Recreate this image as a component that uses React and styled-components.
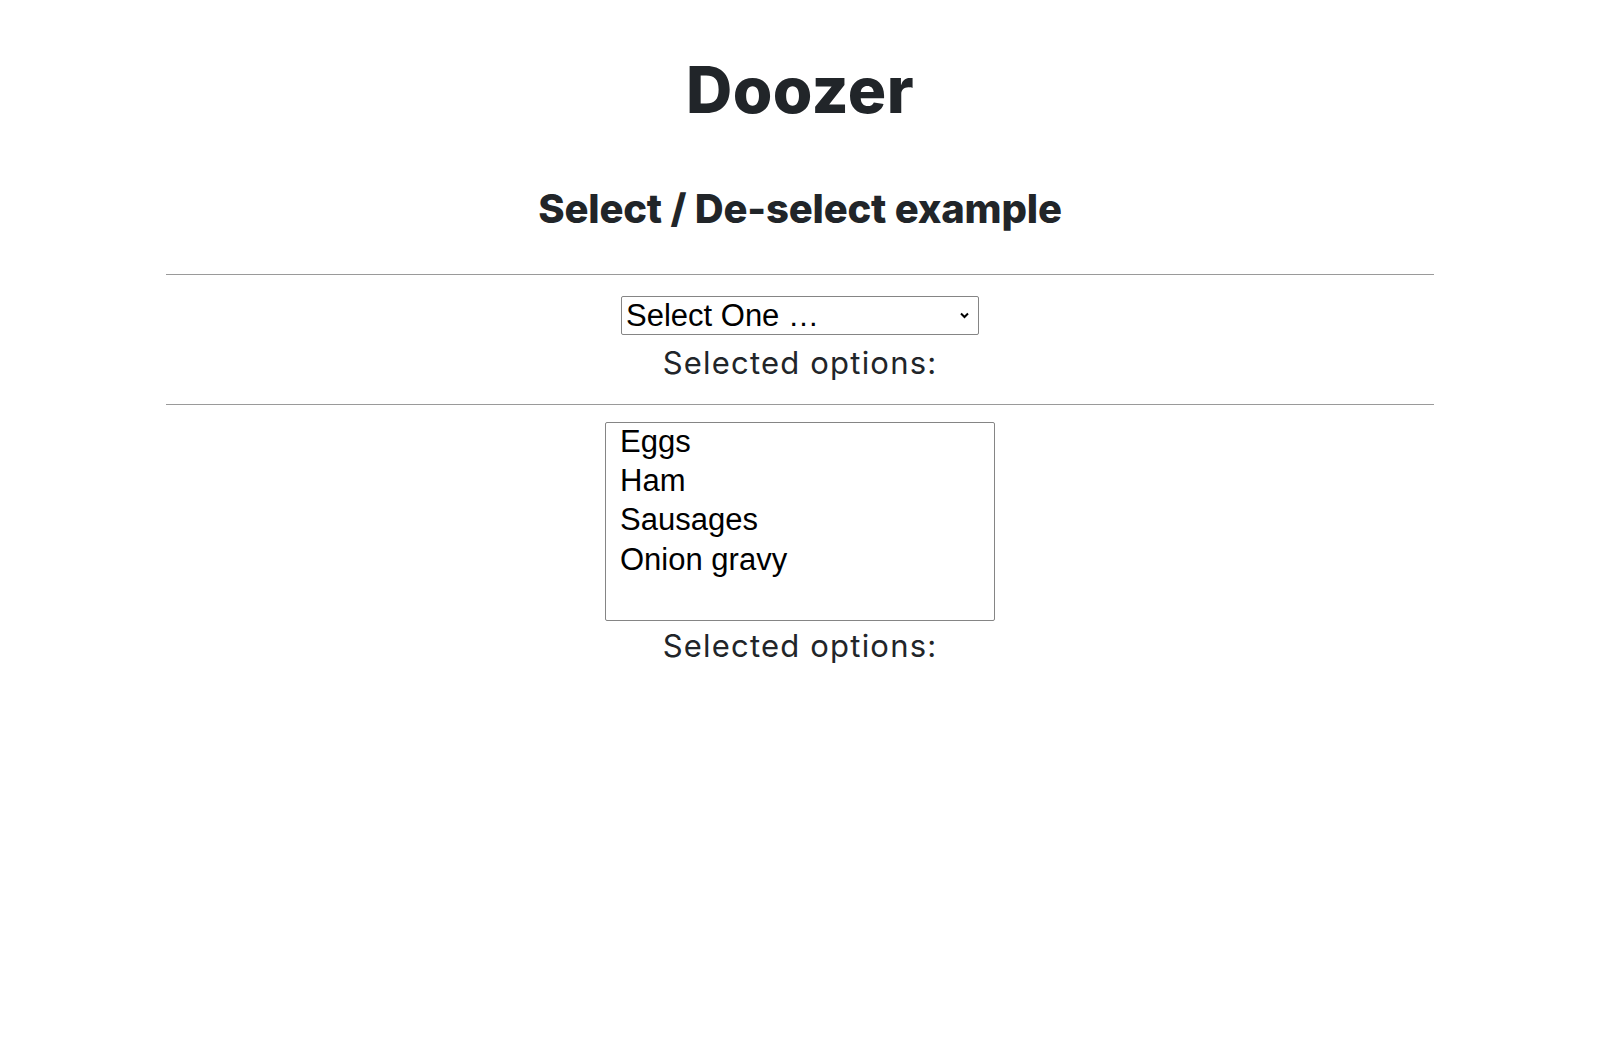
import React, { useState } from 'react';
import styled, { createGlobalStyle } from 'styled-components';

const GlobalStyle = createGlobalStyle`
  body {
    margin: 8px;
    background: #ffffff;
    color: #212529;
    font-family: Inter, "Open Sans", sans-serif;
  }
`;

const Page = styled.div`
  padding-top: 44px;
  text-align: center;
`;

const Title = styled.h1`
  margin: 0;
  font-size: 64px;
  line-height: 1.2;
  font-weight: 800;
  letter-spacing: 0.5px;
  color: #212529;
`;

const Subtitle = styled.h2`
  margin: 56px 0 41px;
  font-size: 40px;
  line-height: 1.2;
  font-weight: 800;
  letter-spacing: -0.2px;
  color: #212529;
`;

const Divider = styled.hr`
  width: 80%;
  margin: 0 auto;
  border: 0;
  border-top: 1px solid #9a9a9a;
`;

const Section = styled.div`
  display: flex;
  flex-direction: column;
  align-items: center;
  padding-top: ${(p) => p.$top}px;
  padding-bottom: ${(p) => p.$bottom}px;
`;

const SelectWrap = styled.div`
  position: relative;
  width: 358px;
`;

const Dropdown = styled.select`
  appearance: none;
  width: 100%;
  height: 39px;
  padding: 0 30px 0 4px;
  border: 1px solid #858585;
  border-radius: 2px;
  background: #fff;
  color: #000;
  font-family: "Liberation Sans", Arial, sans-serif;
  font-size: 31px;
`;

const Chevron = styled.svg`
  position: absolute;
  right: 10px;
  top: 16px;
  width: 9px;
  height: 7px;
  pointer-events: none;
`;

const ListBox = styled.select`
  width: 390px;
  height: 199px;
  padding: 0;
  border: 1px solid #858585;
  border-radius: 2px;
  background: #fff;
  color: #000;
  font-family: "Liberation Sans", Arial, sans-serif;
  font-size: 31px;
  overflow: hidden;
  outline: none;

  option {
    padding: 1px 14px 1px;
  }
`;

const SelectedText = styled.p`
  margin: ${(p) => p.$gap}px 0 0;
  font-size: 31px;
  line-height: 1.2;
  font-weight: 400;
  letter-spacing: 1.2px;
  color: #212529;
`;

const foods = ['Eggs', 'Ham', 'Sausages', 'Onion gravy'];

function App() {
  const [single, setSingle] = useState('');
  const [multi, setMulti] = useState([]);

  return (
    <>
      <GlobalStyle />
      <Page>
        <Title>Doozer</Title>
        <Subtitle>Select / De-select example</Subtitle>
        <Divider />
        <Section $top={21} $bottom={23}>
          <SelectWrap>
            <Dropdown value={single} onChange={(e) => setSingle(e.target.value)}>
              <option value="">Select One …</option>
              {foods.map((f) => (
                <option key={f} value={f}>{f}</option>
              ))}
            </Dropdown>
            <Chevron viewBox="0 0 9 7">
              <path d="M1 1.5 L4.5 5 L8 1.5" fill="none" stroke="#000" strokeWidth="2" />
            </Chevron>
          </SelectWrap>
          <SelectedText $gap={9}>Selected options: {single}</SelectedText>
        </Section>
        <Divider />
        <Section $top={17} $bottom={0}>
          <ListBox
            multiple
            value={multi}
            onChange={(e) => setMulti(Array.from(e.target.selectedOptions, (o) => o.value))}
          >
            {foods.map((f) => (
              <option key={f} value={f}>{f}</option>
            ))}
          </ListBox>
          <SelectedText $gap={6}>Selected options: {multi.join(', ')}</SelectedText>
        </Section>
      </Page>
    </>
  );
}

export default App;
